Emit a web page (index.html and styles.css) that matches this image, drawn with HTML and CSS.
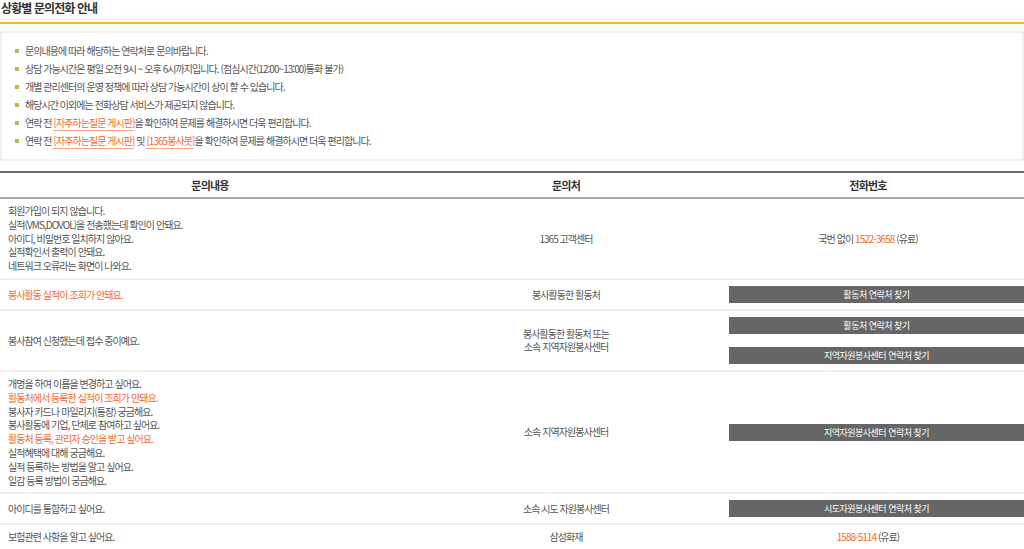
FILE: index.html
```html
<!DOCTYPE html>
<html lang="ko">
<head>
    <meta charset="UTF-8">
    <meta name="viewport" content="width=device-width, initial-scale=1.0">
    <title>상황별 문의전화 안내</title>
    <link rel="stylesheet" href="styles.css">
</head>
<body>
    <h2 class="page-title">상황별 문의전화 안내</h2>

    <div class="notice-box">
        <ul class="notice-list">
            <li>문의내용에 따라 해당하는 연락처로 문의바랍니다.</li>
            <li>상담 가능시간은 평일 오전 9시 ~ 오후 6시까지입니다. (점심시간(12:00~13:00)통화 불가)</li>
            <li>개별 관리센터의 운영 정책에 따라 상담 가능시간이 상이 할 수 있습니다.</li>
            <li>해당시간 이외에는 전화상담 서비스가 제공되지 않습니다.</li>
            <li>연락 전 <a href="#" class="link">[자주하는질문 게시판]</a>을 확인하여 문제를 해결하시면 더욱 편리합니다.</li>
            <li>연락 전 <a href="#" class="link">[자주하는질문 게시판]</a> 및 <a href="#" class="link">[1365봉사봇]</a>을 확인하여 문제를 해결하시면 더욱 편리합니다.</li>
        </ul>
    </div>

    <table class="contact-table">
        <colgroup>
            <col class="col-question">
            <col class="col-place">
            <col>
        </colgroup>
        <thead>
            <tr>
                <th>문의내용</th>
                <th>문의처</th>
                <th>전화번호</th>
            </tr>
        </thead>
        <tbody>
            <tr>
                <td class="question">
                    회원가입이 되지 않습니다.<br>
                    실적(VMS,DOVOL)을 전송했는데 확인이 안돼요.<br>
                    아이디, 비밀번호 일치하지 않아요.<br>
                    실적확인서 출력이 안돼요.<br>
                    네트워크 오류라는 화면이 나와요.
                </td>
                <td class="place">1365 고객센터</td>
                <td class="phone">국번 없이 <span class="highlight">1522-3658</span> (유료)</td>
            </tr>
            <tr>
                <td class="question"><span class="highlight">봉사활동 실적이 조회가 안돼요.</span></td>
                <td class="place">봉사활동한 활동처</td>
                <td class="action"><a href="#" class="find-btn">활동처 연락처 찾기</a></td>
            </tr>
            <tr>
                <td class="question">봉사참여 신청했는데 접수 중이예요.</td>
                <td class="place">봉사활동한 활동처 또는<br>소속 지역자원봉사센터</td>
                <td class="action">
                    <a href="#" class="find-btn">활동처 연락처 찾기</a>
                    <a href="#" class="find-btn">지역자원봉사센터 연락처 찾기</a>
                </td>
            </tr>
            <tr>
                <td class="question">
                    개명을 하여 이름을 변경하고 싶어요.<br>
                    <span class="highlight">활동처에서 등록한 실적이 조회가 안돼요.</span><br>
                    봉사자 카드나 마일리지(통장) 궁금해요.<br>
                    봉사활동에 기업, 단체로 참여하고 싶어요.<br>
                    <span class="highlight">활동처 등록, 관리자 승인을 받고 싶어요.</span><br>
                    실적혜택에 대해 궁금해요.<br>
                    실적 등록하는 방법을 알고 싶어요.<br>
                    일감 등록 방법이 궁금해요.
                </td>
                <td class="place">소속 지역자원봉사센터</td>
                <td class="action"><a href="#" class="find-btn">지역자원봉사센터 연락처 찾기</a></td>
            </tr>
            <tr>
                <td class="question">아이디를 통합하고 싶어요.</td>
                <td class="place">소속 시도 자원봉사센터</td>
                <td class="action"><a href="#" class="find-btn">시도자원봉사센터 연락처 찾기</a></td>
            </tr>
            <tr>
                <td class="question">보험관련 사항을 알고 싶어요.</td>
                <td class="place">삼성화재</td>
                <td class="phone"><span class="highlight">1588-5114</span> (유료)</td>
            </tr>
        </tbody>
    </table>
</body>
</html>
```

FILE: styles.css
```css
body {
    font-family: "Noto Sans CJK KR", "Noto Sans", sans-serif;
    margin: 0;
    padding: 0;
    background-color: #fff;
    color: #555;
    font-size: 10px;
    letter-spacing: -0.95px;
    overflow: hidden;
}

.page-title {
    margin: 0;
    padding: 0 0 6px 1px;
    font-size: 12px;
    line-height: 16px;
    font-weight: bold;
    letter-spacing: -0.9px;
    color: #333;
    border-bottom: 2px solid #f7b81e;
}

.notice-box {
    margin-top: 7px;
    border: 2px solid #f1f1f1;
    padding: 9px 0;
}

.notice-list {
    list-style: none;
    margin: 0;
    padding: 0 0 0 13px;
}

.notice-list li {
    position: relative;
    padding-left: 10px;
    line-height: 18px;
    color: #555;
}

.notice-list li::before {
    content: "";
    position: absolute;
    left: 0;
    top: 7px;
    width: 4px;
    height: 4px;
    background-color: #b7bb55;
}

.link {
    color: #f26a2e;
    text-decoration: none;
    border-bottom: 1px solid #f6a27c;
}

.contact-table {
    width: 100%;
    margin-top: 10px;
    border-collapse: collapse;
    table-layout: fixed;
}

.col-question {
    width: 420px;
}

.col-place {
    width: 292px;
}

.contact-table th {
    height: 24px;
    padding: 0;
    font-size: 11px;
    letter-spacing: -0.8px;
    font-weight: bold;
    color: #333;
    border-top: 2px solid #6b6b6b;
    border-bottom: 2px solid #aaa;
}

.contact-table td {
    padding: 5px 0;
    line-height: 13.8px;
    border-bottom: 2px solid #eee;
    vertical-align: middle;
}

.question {
    padding-left: 8px !important;
    text-align: left;
}

.place,
.phone {
    text-align: center;
}

.contact-table .action {
    padding: 6px 0 6px 17px;
}

.find-btn {
    display: block;
    height: 17px;
    line-height: 17px;
    background-color: #666;
    color: #fff;
    font-size: 9px;
    letter-spacing: -0.5px;
    text-align: center;
    text-decoration: none;
}

.find-btn + .find-btn {
    margin-top: 13px;
}

.highlight {
    color: #f26a2e;
}
```
